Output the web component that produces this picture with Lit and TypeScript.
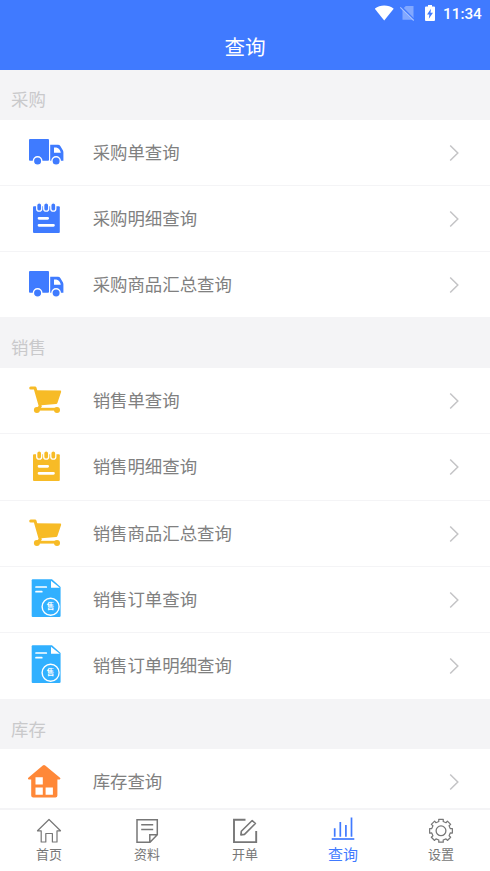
import { LitElement, html, css, svg } from "lit";
import { customElement, property } from "lit/decorators.js";

const rowIcons: Record<string, unknown> = {
  truck: svg`
    <g fill="#3f7bff">
      <rect x="5" y="9" width="20" height="21.700" rx="1"/>
      <path fill-rule="evenodd" d="M26.200 14.800h7.800c1 0 1.800.4 2.300 1.200l2.400 4c.4.7.7 1.400.7 2.200V30.700H26.200zM30 17.500v5.300h6.800c-.2-2.200-1.800-4.600-4.500-5.300z"/>
      <circle cx="13.600" cy="31" r="4.200" stroke="#fff" stroke-width="1.400"/>
      <circle cx="32.100" cy="31" r="4.200" stroke="#fff" stroke-width="1.400"/>
    </g>`,
  noteBlue: note("#3f7bff"),
  noteYellow: note("#f7bb26"),
  cart: svg`
    <g fill="#f7bb26">
      <path d="M11 12.300 36.200 12.600a1 1 0 0 1 .9 1.300L33.400 25.100a1.500 1.500 0 0 1-1.300 1L17.300 27.300z"/>
      <path d="M6.700 9.900h4.300L16.300 28.300 13 32" fill="none" stroke="#f7bb26" stroke-width="3" stroke-linecap="round" stroke-linejoin="round"/>
      <path d="M13 31.200h20" stroke="#f7bb26" stroke-width="2.800"/>
      <circle cx="12.900" cy="32" r="3"/><circle cx="33" cy="32" r="3"/>
    </g>`,
  doc: svg`
    <path fill="#31b0ff" d="M8.700 2.300H28l8.600 7.700v28.700a1.200 1.200 0 0 1-1.200 1.200H8.700a1 1 0 0 1-1-1V3.300a1 1 0 0 1 1-1z"/>
    <path fill="#fff" d="M27 3.800v7h8.800z"/>
    <path d="M12 10h10.300M12 14.700h5.800" stroke="#fff" stroke-width="1.700" stroke-linecap="round"/>
    <circle cx="26.600" cy="29.700" r="8.500" fill="none" stroke="#fff" stroke-width="1.400"/>
    <text x="26.600" y="32.400" text-anchor="middle" fill="#fff" font-size="7.500" font-weight="700">售</text>`,
  house: svg`
    <path fill="#ff8838" d="M18.800 6.600a1.800 1.800 0 0 1 2.400 0L36 18.800c.8.700.4 1.700-.6 1.700h-2V36.500a2 2 0 0 1-2 2H9.200a2 2 0 0 1-2-2v-16h-2.300c-1 0-1.300-1-.6-1.700z"/>
    <path fill="#fff" d="M11.500 18.300h7.300v7.300h-7.300zM11.500 28.500h7.300v7.300h-7.300zM21.600 28.500h7.300v7.300h-7.300z"/>`,
};

function note(color: string) {
  return svg`
    <rect x="9" y="10.300" width="26.800" height="26.600" rx="1" fill=${color}/>
    ${[15.200, 22.200, 29.300].map(
      (x) => svg`<rect x=${x - 2.500} y="6.800" width="5" height="8.400" rx="2.500" fill=${color} stroke="#fff" stroke-width="1.300"/>`
    )}
    <path d="M15 22.300h8.700M15 29.300h14.500" stroke="#fff" stroke-width="2.700" stroke-linecap="round"/>`;
}

function gearPath(cx: number, cy: number): string {
  const pts: string[] = [];
  for (let i = 0; i < 8; i++) {
    const a = (i * Math.PI) / 4;
    for (const [d, r] of [[-0.23, 9.5], [-0.2, 11.6], [0.2, 11.6], [0.23, 9.5]]) {
      pts.push(`${(cx + r * Math.sin(a + d)).toFixed(2)} ${(cy - r * Math.cos(a + d)).toFixed(2)}`);
    }
  }
  return `M${pts.join("L")}Z`;
}

const tabIcons: Record<string, unknown> = {
  home: svg`<path d="M15 3.500 3.500 14.800h3.700V26h4.600v-8.500h6.600V26H23V14.800h3.500z" stroke-width="1.200" stroke-linejoin="round"/>`,
  paper: svg`<path d="M5 3.700h20.300v15L18 26.200H5zM25.300 18.700H17.800v7.200M9.200 8.800h12M9.200 13.600h12" stroke-width="1.500"/>`,
  edit: svg`<path d="M15.500 3.800H4v22.300h22.200V15" stroke-width="1.900"/>
    <path d="M11.300 15.300 22.200 4.500l3.200 3L14.500 18.400l-3.600.5z" stroke-width="1.600" stroke-linejoin="round"/>`,
  chart: svg`<path d="M6.700 12.300v8.500M12.300 6v14.800M17.900 9v11.800M23.500 1.500v19.300" stroke-width="1.700"/><path d="M3.700 23h22.600" stroke-width="1.700"/>`,
  gear: svg`<path d=${gearPath(15, 14.8)} stroke-width="1.200" stroke-linejoin="round"/><circle cx="15" cy="14.800" r="4.900" stroke-width="1.300"/>`,
};

@customElement("menu-row")
class MenuRow extends LitElement {
  @property() icon = "";
  @property() label = "";
  static styles = css`
    :host {
      display: flex;
      box-sizing: border-box;
      height: 66.3px;
      padding: 0 30px 0 24px;
      background: #fff;
      border-bottom: 1px solid #f4f4f6;
    }
    .icon {
      flex: none;
      width: 44px;
      height: 44px;
      margin-top: 10px;
    }
    .label {
      flex: 1;
      margin-left: 24.700px;
      font-size: 17.4px;
      line-height: 64px;
      color: #808080;
      white-space: nowrap;
    }
    .arrow {
      flex: none;
      width: 12px;
      height: 18px;
      margin-top: 24px;
    }
  `;
  render() {
    return html`
      <svg class="icon" viewBox="0 0 44 44">${rowIcons[this.icon]}</svg>
      <span class="label">${this.label}</span>
      <svg class="arrow" viewBox="0 0 12 18">
        <path d="M2.200 1.500 9.800 9l-7.600 7.500" fill="none" stroke="#c4c4c6" stroke-width="1.500" />
      </svg>
    `;
  }
}

@customElement("app-root")
class AppRoot extends LitElement {
  private sections = [
    { title: "采购", rows: [["truck", "采购单查询"], ["noteBlue", "采购明细查询"], ["truck", "采购商品汇总查询"]] },
    {
      title: "销售",
      rows: [
        ["cart", "销售单查询"],
        ["noteYellow", "销售明细查询"],
        ["cart", "销售商品汇总查询"],
        ["doc", "销售订单查询"],
        ["doc", "销售订单明细查询"],
      ],
    },
    { title: "库存", rows: [["house", "库存查询"]] },
  ];

  private tabs = [
    ["home", "首页"],
    ["paper", "资料"],
    ["edit", "开单"],
    ["chart", "查询"],
    ["gear", "设置"],
  ];

  static styles = css`
    :host {
      display: flex;
      flex-direction: column;
      height: 871px;
      overflow: hidden;
      background: #f4f4f6;
      font-family: "Noto Sans CJK SC", sans-serif;
    }
    .header {
      flex: none;
      height: 70px;
      background: #407aff;
      color: #fff;
    }
    .status {
      display: flex;
      justify-content: flex-end;
      height: 26px;
      padding-right: 9px;
    }
    .glyphs {
      width: 64px;
      height: 26px;
      margin-right: 4px;
    }
    .time {
      font: 500 15.3px/28px Roboto, sans-serif;
      width: 38px;
      white-space: nowrap;
    }
    .title {
      font-size: 20.600px;
      line-height: 41px;
      text-align: center;
    }
    .list {
      flex: 1;
      min-height: 0;
      overflow: hidden;
    }
    .section {
      box-sizing: border-box;
      height: 49.600px;
      padding: 15px 11px 0;
      font-size: 17.400px;
      line-height: 28.600px;
      color: #c9c9cb;
    }
    .tabs {
      flex: none;
      display: grid;
      grid-template-columns: repeat(5, 1fr);
      height: 61px;
      border-top: 2px solid #f4f4f6;
      background: #fff;
    }
    .tab {
      display: flex;
      flex-direction: column;
      align-items: center;
      padding-top: 6px;
      color: #777;
      font-size: 13px;
      line-height: 20px;
    }
    .tab svg {
      width: 30px;
      height: 28px;
      fill: none;
      stroke: currentColor;
    }
    .active {
      color: #407aff;
      font-size: 15px;
      line-height: 20px;
    }
  `;

  render() {
    return html`
      <div class="header">
        <div class="status">
          <svg class="glyphs" viewBox="0 0 64 26">
            <path fill="#fff" d="M1.500 8.700C6.500 4.300 15.500 4.300 20.500 8.700L11 20.600z" transform="translate(-1.800 0)" />
            <path fill="#fff" opacity=".35" d="M30.800 6H38.500v13.800H27.500V9.300z" />
            <path d="M25.800 6.700 39.500 20.500" stroke="#407aff" stroke-width="2.400" />
            <path d="M25.300 7.300 38.700 20.500" stroke="#a9c4ff" stroke-width="1.100" />
            <path fill="#fff" d="M51 6.500h2V5h4v1.500h2q1 0 1 1v12.500q0 1-1 1h-8q-1 0-1-1V7.500q0-1 1-1z" />
            <path fill="#407aff" d="M56 8.700 52 14.500h2.400L53.800 18.800 58 12.800h-2.500z" />
          </svg>
          <span class="time">11:34</span>
        </div>
        <div class="title">查询</div>
      </div>
      <div class="list">
        ${this.sections.map(
          (s) => html`
            <div class="section">${s.title}</div>
            ${s.rows.map(([icon, label]) => html`<menu-row icon=${icon} label=${label}></menu-row>`)}
          `
        )}
      </div>
      <div class="tabs">
        ${this.tabs.map(
          ([icon, label]) => html`
            <div class="tab ${icon === "chart" ? "active" : ""}">
              <svg viewBox="0 0 30 28">${tabIcons[icon]}</svg>
              <span>${label}</span>
            </div>
          `
        )}
      </div>
    `;
  }
}
